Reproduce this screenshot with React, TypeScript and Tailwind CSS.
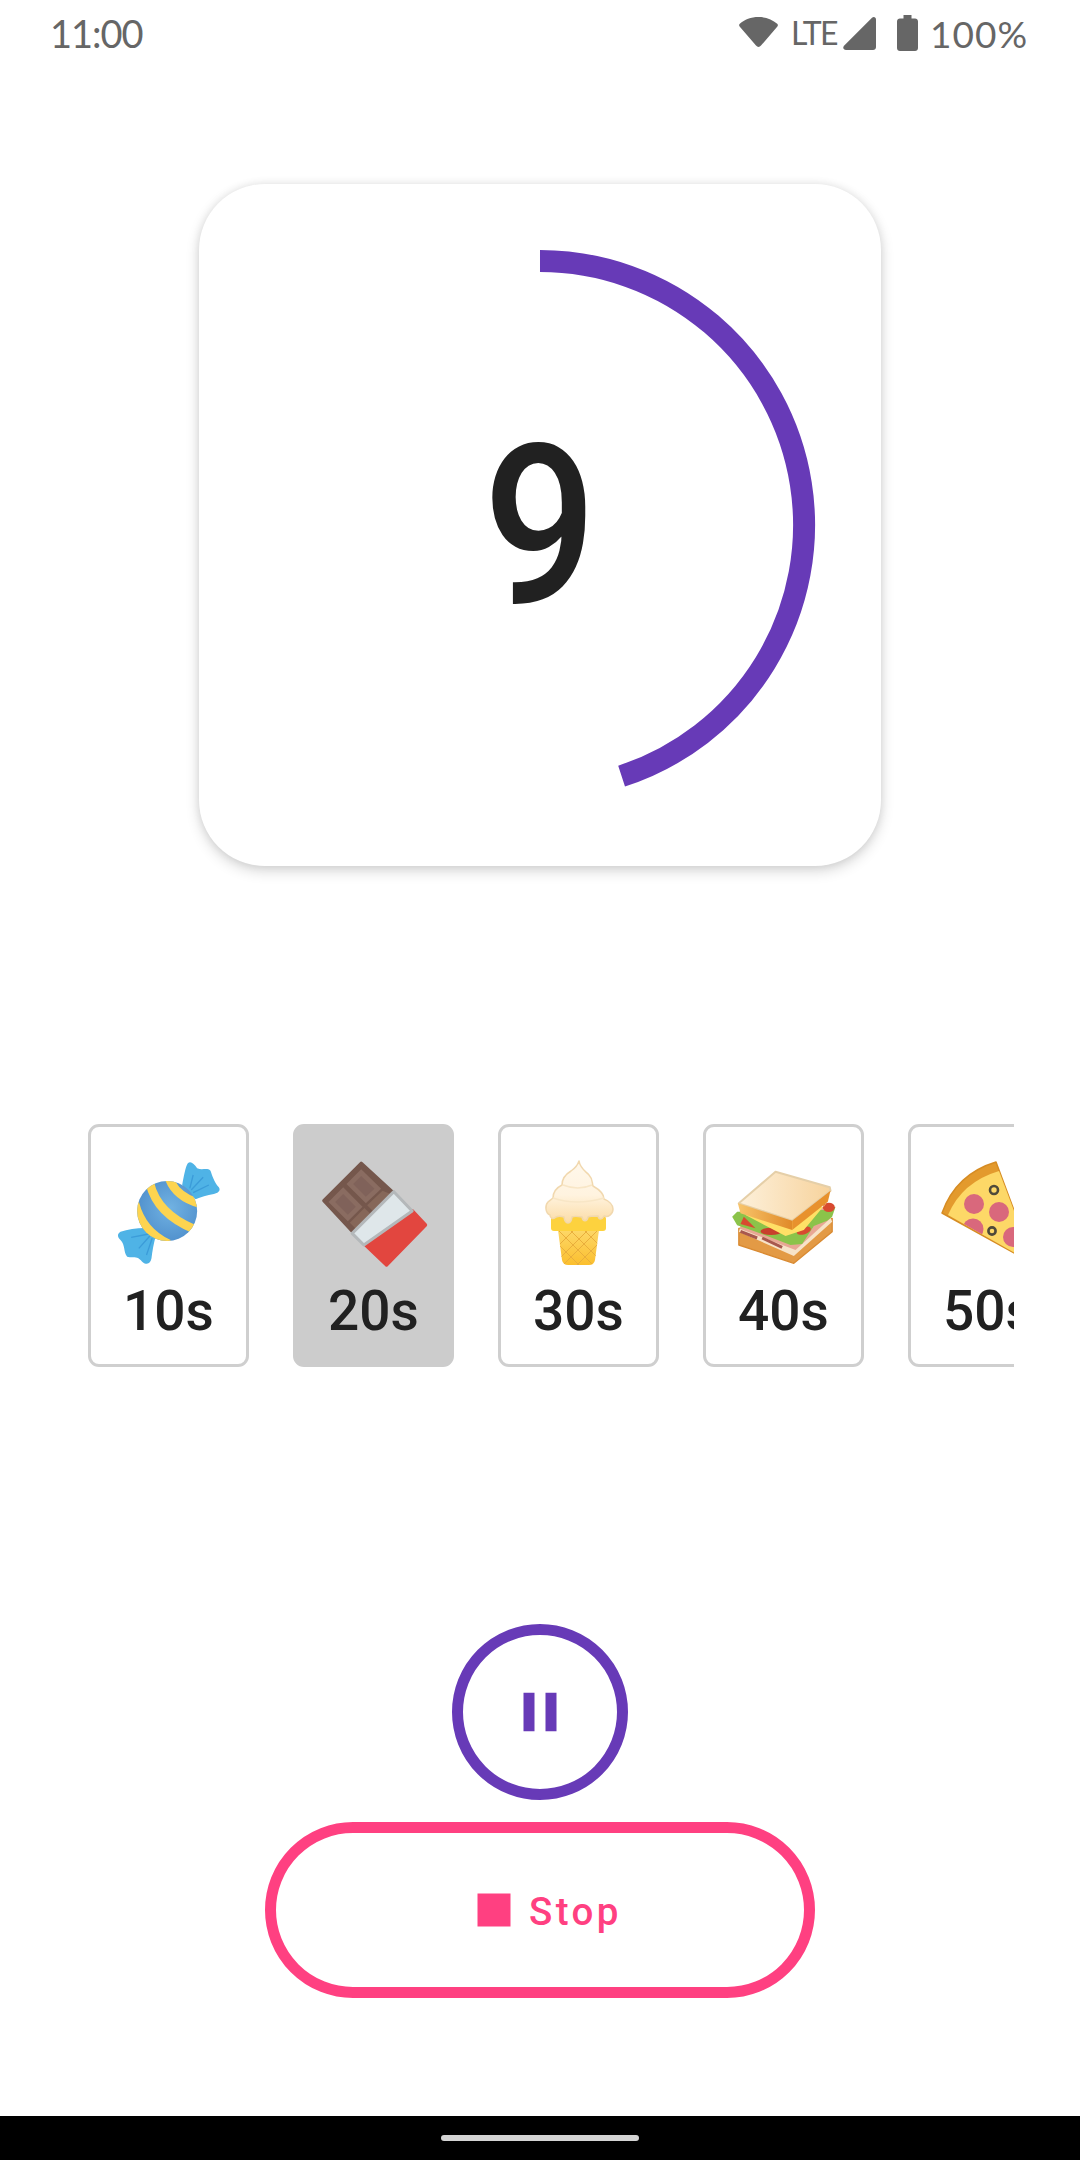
import React from "react";

const roboto = "font-['Roboto',sans-serif]";

function Candy() {
  return (
    <svg width="130" height="130" viewBox="10.5 30 390 390" className="block flex-none">
      <defs>
        <clipPath id="ball"><circle cx="200" cy="213" r="90" /></clipPath>
        <radialGradient id="ballG" cx="0.55" cy="0.45" r="0.6">
          <stop offset="0" stopColor="#71b2e2" />
          <stop offset="1" stopColor="#4f8fcc" />
        </radialGradient>
      </defs>
      <path d="M245 135C250 110 255 80 262 70C270 62 280 70 290 85C305 92 320 82 330 92C335 105 340 125 355 142C362 152 352 160 340 162C320 165 300 172 285 178Z" fill="#4fb3e6" />
      <path d="M150 265C120 262 85 268 60 275C48 282 52 292 60 300C75 315 68 335 80 350C95 355 110 345 125 365C140 378 150 370 153 355C155 335 160 310 165 290Z" fill="#4fb3e6" />
      <path d="M268 145L278 105M272 150L308 112M278 158L325 135M145 282L92 292M148 288L115 325M155 295L138 345" stroke="#3b9cd9" strokeWidth="4" fill="none" />
      <circle cx="200" cy="213" r="90" fill="url(#ballG)" />
      <g clipPath="url(#ball)" fill="none" stroke="#fdd450" strokeWidth="26">
        <path d="M103 190Q125 275 205 312" />
        <path d="M148 130Q170 222 282 268" />
        <path d="M205 112Q225 170 296 190" />
      </g>
    </svg>
  );
}

function Chocolate() {
  return (
    <svg width="130" height="130" viewBox="-4.5 0 390 390" className="block flex-none">
      <path d="M305 182L345 225L228 345L162 282Z" fill="#e2463f" stroke="#e2463f" strokeWidth="10" strokeLinejoin="round" />
      <path d="M152 40L245 125L125 243L40 152Z" fill="#75574c" stroke="#75574c" strokeWidth="10" strokeLinejoin="round" />
      <path d="M152 58L212 116L166 160L108 102Z" fill="#8a6c61" />
      <path d="M152 78L192 116L166 140L128 102Z" fill="#80625a" />
      <path d="M98 112L156 170L112 214L54 156Z" fill="#8a6c61" />
      <path d="M98 132L136 170L112 194L74 156Z" fill="#80625a" />
      <path d="M170 166L216 122L240 132L192 188Z" fill="#866759" />
      <path d="M162 174L184 196L136 236L118 218Z" fill="#866759" />
      <path d="M250 125L305 183L160 285L125 250Z" fill="#dfe7ea" stroke="#b4b8ba" strokeWidth="9" strokeLinejoin="round" />
    </svg>
  );
}

function IceCream() {
  return (
    <svg width="130" height="130" viewBox="0 0 130 130" className="block flex-none">
      <defs>
        <linearGradient id="cream" x1="0" y1="0" x2="0" y2="1">
          <stop offset="0" stopColor="#fff8ec" />
          <stop offset="0.55" stopColor="#fff3df" />
          <stop offset="1" stopColor="#fbdca6" />
        </linearGradient>
        <linearGradient id="coneG" x1="0" y1="0" x2="0" y2="1">
          <stop offset="0" stopColor="#fdd768" />
          <stop offset="1" stopColor="#fbbf2e" />
        </linearGradient>
        <clipPath id="cone"><path d="M44 80H85L81 110Q80 115 75 115H54Q49 115 48 110Z" /></clipPath>
      </defs>
      <path d="M44 80H85L81 110Q80 115 75 115H54Q49 115 48 110Z" fill="url(#coneG)" />
      <g clipPath="url(#cone)" stroke="#e9ae3c" strokeWidth="1" fill="none">
        <path d="M40 90L66 116M40 76L82 118M54 78L90 114M68 78L90 100M90 88L62 116M90 74L48 116M76 78L40 114M62 78L40 100" />
      </g>
      <rect x="37" y="66" width="55" height="15" rx="3" fill="#fdd23e" />
      <path d="M65 11C66 18 71 21 75 25C79 29 78 33 79 36C86 40 90 44 90 49C95 51 99 55 99 59C99 64 94 68 90 66C88 70 85 70 84 66C80 66 76 66 74 67C73 72 69 72 68 67C62 66 60 66 58 67C57 75 51 75 50 67C47 66 44 66 42 67C39 70 36 68 36 65C31 63 31 55 34 52C36 50 38 49 39 48C39 42 42 38 48 35C48 28 52 24 57 21C60 19 63 17 65 11Z" fill="url(#cream)" stroke="#f1d8ae" strokeWidth="1.5" strokeLinejoin="round" />
      <path d="M49 35Q64 41 78 35M39 48Q62 56 90 48" stroke="#f8e6c6" strokeWidth="1.5" fill="none" />
    </svg>
  );
}

function Sandwich() {
  return (
    <svg width="130" height="130" viewBox="-4.5 0 390 390" className="block flex-none">
      <defs>
        <linearGradient id="bread" x1="0" y1="0" x2="1" y2="0">
          <stop offset="0" stopColor="#fdf0da" />
          <stop offset="1" stopColor="#f7d39d" />
        </linearGradient>
        <linearGradient id="crust" x1="0" y1="0" x2="1" y2="0">
          <stop offset="0" stopColor="#f8c56c" />
          <stop offset="1" stopColor="#e08a28" />
        </linearGradient>
      </defs>
      <path d="M55 255L55 285L220 340L335 245L335 205L55 235Z" fill="#e39a45" stroke="#d98a32" strokeWidth="4" strokeLinejoin="round" />
      <path d="M55 245L220 318L335 215L320 175L70 200Z" fill="#f7e3c8" />
      <path d="M58 236L225 300L330 205L310 170L70 190Z" fill="#e8a794" />
      <path d="M60 244L110 264M125 264L185 292" stroke="#a8584e" strokeWidth="9" fill="none" />
      <path d="M35 200L50 185L310 180L345 170L335 200L320 212L280 228L245 282L210 285L140 258L85 238L50 226Z" fill="#8bc34a" />
      <path d="M70 200L105 235L60 222Z" fill="#d84a30" />
      <ellipse cx="152" cy="244" rx="32" ry="11" fill="#c8402c" />
      <ellipse cx="250" cy="242" rx="22" ry="11" transform="rotate(-18 250 242)" fill="#d84a30" />
      <ellipse cx="325" cy="172" rx="18" ry="14" fill="#d84a30" />
      <path d="M75 195L195 258L250 240L325 150L310 170Z" fill="#ffe066" />
      <path d="M165 65L328 112L330 122L215 212L55 160Z" fill="url(#bread)" stroke="#e5cfa8" strokeWidth="6" strokeLinejoin="round" />
      <path d="M52 160L215 212L215 240L60 190Z" fill="url(#crust)" />
      <path d="M215 212L330 122L322 155L215 240Z" fill="#e8912d" />
    </svg>
  );
}

function Pizza() {
  return (
    <svg width="130" height="130" viewBox="0 0 130 130" className="block flex-none">
      <defs>
        <clipPath id="slice"><path d="M24 65Q38 32 75 21L110 114Z" /></clipPath>
      </defs>
      <path d="M18 63Q32 24 72 12L110 114Z" fill="#e39a2d" stroke="#d68c24" strokeWidth="1.5" strokeLinejoin="round" />
      <path d="M24 65Q38 32 75 21L110 114Z" fill="#fdd867" />
      <g clipPath="url(#slice)">
        <circle cx="50" cy="54" r="10" fill="#d9687c" />
        <circle cx="75" cy="62" r="10" fill="#d9687c" />
        <circle cx="49" cy="79" r="10.5" fill="#d9687c" />
        <circle cx="89" cy="87" r="10" fill="#d9687c" />
      </g>
      <circle cx="70" cy="40" r="4" fill="none" stroke="#4f4a3a" strokeWidth="2.6" />
      <circle cx="68" cy="81" r="3.6" fill="none" stroke="#4f4a3a" strokeWidth="2.6" />
    </svg>
  );
}

const items: { label: string; icon: React.ReactNode; selected?: boolean }[] = [
  { label: "10s", icon: <Candy /> },
  { label: "20s", icon: <Chocolate />, selected: true },
  { label: "30s", icon: <IceCream /> },
  { label: "40s", icon: <Sandwich /> },
  { label: "50s", icon: <Pizza /> },
];

export default function App() {
  return (
    <div className="w-[1080px] h-[2160px] bg-white flex flex-col items-center overflow-hidden">
      <div className="w-full h-[66px] flex-none flex items-center justify-between pl-[50px] pr-[52px] text-[#666666] font-['Lato',sans-serif]">
        <span className="text-[38px] leading-[66px] -mt-[1px] tracking-[-1px]">11:00</span>
        <div className="flex items-center">
          <svg width="39" height="30" viewBox="0 0 39 30" className="-mt-[3px]">
            <path d="M19.5 0C12 0 5.5 2.6 0.8 6.7C-0.2 7.6 0 8.6 0.6 9.4L17 28.6C18.4 30.3 20.6 30.3 22 28.6L38.4 9.4C39 8.6 39.2 7.6 38.2 6.7C33.5 2.6 27 0 19.5 0Z" fill="#666666" />
          </svg>
          <span className="text-[32px] leading-none ml-[13px] w-[45px] tracking-[-1.6px] -mt-[1px]">LTE</span>
          <svg width="33" height="33" viewBox="0 0 33 33" className="ml-[7px] mt-[1px]">
            <path d="M29 0.8C30.8 -0.8 33 0.4 33 2.6V30C33 31.7 31.7 33 30 33H3C0.6 33 -0.7 30.6 1 28.8Z" fill="#666666" />
          </svg>
          <svg width="21" height="36" viewBox="0 0 21 36" className="ml-[21px] -mt-[1px]">
            <path d="M6.5 0H14.5V3.5H18C19.7 3.5 21 4.8 21 6.5V33C21 34.7 19.7 36 18 36H3C1.3 36 0 34.7 0 33V6.5C0 4.8 1.3 3.5 3 3.5H6.5Z" fill="#666666" />
          </svg>
          <span className="text-[37px] leading-none ml-[12px] w-[98px] tracking-[1px]">100%</span>
        </div>
      </div>

      <div className="relative w-[682px] h-[682px] mt-[118px] flex-none flex items-center justify-center bg-white rounded-[66px] shadow-[0_5px_14px_rgba(0,0,0,0.16),0_0_8px_rgba(0,0,0,0.08)]">
        <span className={`${roboto} font-medium text-[222px] leading-none text-[#212121] scale-x-[0.9] mt-[4px]`}>9</span>
        <svg width="682" height="682" viewBox="0 0 682 682" className="absolute inset-0">
          <path d="M341 77A264 264 0 0 1 422.6 592.1" fill="none" stroke="#673ab7" strokeWidth="22" />
        </svg>
      </div>

      <div className={`w-[948px] flex-none mt-[258px] px-[22px] flex gap-[44px] overflow-hidden ${roboto}`}>
        {items.map((it) => (
          <div
            key={it.label}
            className={
              it.selected
                ? "w-[161px] h-[243px] flex-none flex flex-col items-center rounded-[11px] border-[3px] border-[#cccccc] bg-[#cccccc]"
                : "w-[161px] h-[243px] flex-none flex flex-col items-center rounded-[11px] border-[3px] border-[#cfcfcf] bg-white"
            }
          >
            <div className="mt-[23px]">{it.icon}</div>
            <span className="text-[55px] leading-[66px] -mt-[2px] font-medium text-[#212121] whitespace-nowrap">{it.label}</span>
          </div>
        ))}
      </div>

      <div className="w-[176px] h-[176px] flex-none mt-[257px] rounded-full border-[11px] border-[#673ab7] flex items-center justify-center">
        <svg width="66" height="66" viewBox="0 0 24 24" fill="#673ab7">
          <path d="M6 19h4V5H6v14zm8-14v14h4V5h-4z" />
        </svg>
      </div>

      <div className={`w-[550px] h-[176px] flex-none mt-[22px] rounded-full border-[11px] border-[#ff4081] flex items-center justify-center ${roboto}`}>
        <svg width="66" height="66" viewBox="0 0 24 24" fill="#ff4081" className="flex-none ml-[3px]">
          <path d="M6 6h12v12H6z" />
        </svg>
        <span className="text-[38.5px] leading-none font-medium tracking-[3.4px] text-[#ff4081] ml-[2px] mt-[4px]">Stop</span>
      </div>

      <div className="w-full flex-1 min-h-0 flex items-end">
        <div className="w-full h-[44px] bg-black flex items-center justify-center">
          <div className="w-[198px] h-[6px] rounded-full bg-[#d3d3d3]" />
        </div>
      </div>
    </div>
  );
}
